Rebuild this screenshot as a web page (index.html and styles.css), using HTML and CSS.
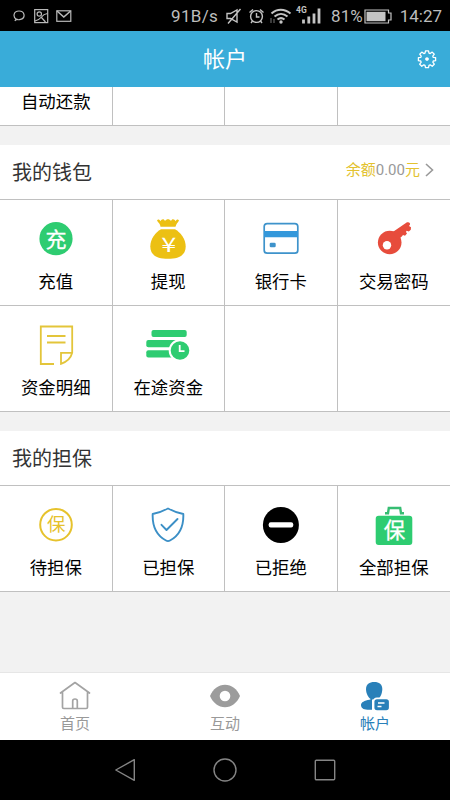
FILE: index.html
```html
<!DOCTYPE html>
<html lang="zh-CN">
<head>
    <meta charset="UTF-8">
    <meta name="viewport" content="width=device-width, initial-scale=1.0">
    <title>帐户</title>
    <link rel="stylesheet" href="styles.css">
</head>
<body>
    <div class="status-bar">
        <svg class="notices" width="60" height="16" viewBox="0 0 60 16" fill="none" stroke="#b9b9b9" stroke-width="1.2">
            <path d="M3.200 11.200C-.2 9 .2 3 6 3s7 7 1.500 8.400c-1.600.5-2.800.4-3.500-.1L1.800 12.800z"/>
            <rect x="21.700" y="1.600" width="13" height="13"/>
            <circle cx="26.300" cy="6" r="2.200"/>
            <path d="M22 13c3-1 5-2 6.500-4s3-3 6-3.500M28.500 9.500l4 4.500"/>
            <rect x="43.800" y="2.800" width="14" height="10.500"/>
            <path d="M44 3l6.800 6 6.800-6" stroke-width="1.600"/>
        </svg>
        <span class="speed">91B/s</span>
        <svg class="signals" width="96" height="22" viewBox="0 0 96 22" fill="none" stroke="#c4c4c4" stroke-width="1.400">
            <path d="M1 8.500h3.500L11 5v12l-6.500-3.500H1zM14.500 4L2 18.500"/>
            <circle cx="30.500" cy="11.500" r="5.900"/>
            <path d="M30.500 8v4h3M23.500 7.500l3.500-3M37.500 7.500l-3.500-3M26.500 16l-1.500 2M34.500 16l1.500 2"/>
            <path d="M45.500 8.500c5.500-5 13-5 19 0M48.500 11.500c4-3.500 9-3.500 13 0M51.500 14.500c2.500-2 4.500-2 7 0" stroke-width="2"/>
            <circle cx="55" cy="17" r="1.700" fill="#c4c4c4" stroke="none"/>
            <path d="M45 13v5M48 14v4" stroke="#777" stroke-width="1"/>
            <path d="M77.500 18.500v-4M82.800 18.500v-7M88 18.500v-10M93 18.500v-15" stroke-width="2.800"/>
            <text class="net" x="70" y="7.500">4G</text>
        </svg>
        <span class="percent">81%</span>
        <svg class="battery" width="28" height="15" viewBox="0 0 28 15" fill="none" stroke="#c4c4c4" stroke-width="1.200">
            <path d="M1 1h23.500v3H27v7h-2.500v3H1z"/>
            <rect x="2.500" y="2.800" width="19" height="9.400" fill="#c4c4c4" stroke="none"/>
        </svg>
        <span class="time">14:27</span>
    </div>

    <header class="header">
        <h1>帐户</h1>
        <svg class="gear" width="20" height="20" viewBox="-10 -10 20 20" fill="none" stroke="#fff" stroke-width="1.300" stroke-linejoin="round">
            <path d="M-1.500-8.200h3l.5 2.300 1.200.5 2-1.500 2.100 2.100-1.500 2 .5 1.200 2.300.3v3l-2.300.3-.5 1.200 1.500 2-2.100 2.100-2-1.500-1.200.5-.5 2.300h-3l-.5-2.300-1.200-.5-2 1.500-2.100-2.100 1.500-2-.5-1.200-2.300-.3v-3l2.300-.3.5-1.200-1.500-2 2.100-2.100 2 1.500 1.200-.5z"/>
            <circle r="1.200" fill="#fff"/>
        </svg>
    </header>

    <main class="content">
        <div class="grid grid-cut">
            <div class="cell"><span class="label">自动还款</span></div>
            <div class="cell"></div>
            <div class="cell"></div>
            <div class="cell"></div>
        </div>

        <section class="section">
            <div class="section-head">
                <h2>我的钱包</h2>
                <div class="balance">
                    余额<span class="amount">0.00</span>元
                    <svg width="9" height="14" viewBox="0 0 9 14" fill="none" stroke="#999" stroke-width="1.600"><path d="M1 1l6.500 6L1 13"/></svg>
                </div>
            </div>
            <div class="grid">
                <div class="cell">
                    <svg class="icon" viewBox="0 0 44 44">
                        <circle cx="22" cy="21.700" r="16.600" fill="#2ecc71"/>
                        <text class="icon-text bold" x="22" y="29.500" font-size="21" fill="#fff">充</text>
                    </svg>
                    <span class="label">充值</span>
                </div>
                <div class="cell">
                    <svg class="icon" viewBox="0 0 44 44">
                        <path fill="#ecc013" d="M11 3.500c1-1.500 2.500-1 3.500.7C15.500 2 18 1.500 19 4c1.500-2.500 4.500-2.500 6 0 1-2.500 3.500-2 4.500.2 1-1.700 2.500-2.200 3.500-.7-1 2-3 3.500-3.500 6.300h-15C14.500 7 12 5.500 11 3.500z"/>
                        <path fill="#ecc013" d="M15 12.300h14c5.500 3 10.700 9.700 10.700 17.200 0 8.500-6.500 12.300-17.700 12.300S4.300 38 4.300 29.500C4.300 22 9.500 15.300 15 12.300z"/>
                        <text class="icon-text yen" transform="translate(22.700 34.700) scale(1.350 1)" font-size="20" fill="#fff">¥</text>
                    </svg>
                    <span class="label">提现</span>
                </div>
                <div class="cell">
                    <svg class="icon" viewBox="0 0 44 44">
                        <rect x="5.200" y="6.600" width="33.600" height="29.600" rx="3" fill="none" stroke="#3e93cb" stroke-width="1.700"/>
                        <path fill="#3498db" d="M5 14h34v6.300H5z"/>
                        <rect x="10.700" y="25.800" width="6" height="4.400" rx="1.300" fill="#3e93cb"/>
                    </svg>
                    <span class="label">银行卡</span>
                </div>
                <div class="cell">
                    <svg class="icon" viewBox="0 0 44 44">
                        <circle cx="17.700" cy="25.500" r="11.800" fill="#e74c3c"/>
                        <path fill="#e74c3c" d="M20 15.500L35 5.300c2-.6 3.500.5 3 2.300l-1 1.500 2 1.200-.2 2.500-2 1.800-2.200-.8-.6 1.200 1 1.500-2 2.200-2-.7-1.200 1.400-3.800 3z"/>
                        <circle cx="15" cy="28.200" r="4.200" fill="#fff"/>
                    </svg>
                    <span class="label">交易密码</span>
                </div>
                <div class="cell">
                    <svg class="icon" viewBox="0 0 44 44" fill="none" stroke="#e3c53a" stroke-width="1.800">
                        <path d="M20 41H6.800V3.500h31.400v26.300q-2 8-11.200 11v-11h11M13 13h18.500M13 19.500h18.500"/>
                    </svg>
                    <span class="label">资金明细</span>
                </div>
                <div class="cell">
                    <svg class="icon" viewBox="0 0 44 44" fill="#2ecc71">
                        <rect x="5.500" y="7" width="35.200" height="7" rx="2"/>
                        <rect x=".3" y="17" width="32" height="7.300" rx="2"/>
                        <rect x=".3" y="27.200" width="30" height="7.300" rx="2"/>
                        <circle cx="34" cy="27.500" r="10.300" stroke="#fff" stroke-width="2"/>
                        <path d="M33.700 22v6.200h4.800" fill="none" stroke="#fff" stroke-width="1.800"/>
                    </svg>
                    <span class="label">在途资金</span>
                </div>
                <div class="cell"></div>
                <div class="cell"></div>
            </div>
        </section>

        <section class="section">
            <div class="section-head">
                <h2>我的担保</h2>
            </div>
            <div class="grid">
                <div class="cell">
                    <svg class="icon" viewBox="0 0 44 44">
                        <circle cx="22" cy="21.700" r="15.800" fill="none" stroke="#e6c22c" stroke-width="2"/>
                        <text class="icon-text" x="22.300" y="28.300" font-size="18.500" fill="#e6c22c">保</text>
                    </svg>
                    <span class="label">待担保</span>
                </div>
                <div class="cell">
                    <svg class="icon" viewBox="0 0 44 44" fill="none" stroke="#3b8fc6" stroke-width="1.900" stroke-linecap="round" stroke-linejoin="round">
                        <path d="M22 5.500c4.500 2.500 9.500 4.300 15.300 5.500.5 12-4 21.500-13.300 26.500q-2 1.200-4 0C10.700 32.500 6.200 23 6.700 11 12.500 9.800 17.500 8 22 5.500z"/>
                        <path d="M15.500 21.800l5 5.200 11-11"/>
                    </svg>
                    <span class="label">已担保</span>
                </div>
                <div class="cell">
                    <svg class="icon" viewBox="0 0 44 44">
                        <circle cx="21.900" cy="22" r="18" fill="#000"/>
                        <rect x="9.700" y="19.300" width="24.500" height="5.200" rx="2" fill="#fff"/>
                    </svg>
                    <span class="label">已拒绝</span>
                </div>
                <div class="cell">
                    <svg class="icon" viewBox="0 0 44 44">
                        <path d="M13 10.300h3l.8-5.300h11.400l.8 5.300h3" fill="none" stroke="#36bd72" stroke-width="2.400"/>
                        <rect x="3.700" y="12.700" width="36.600" height="29.300" rx="3" fill="#2ecc71"/>
                        <text class="icon-text bold" x="22.500" y="35" font-size="21.500" fill="#fff">保</text>
                    </svg>
                    <span class="label">全部担保</span>
                </div>
            </div>
        </section>
    </main>

    <nav class="tab-bar">
        <div class="tab">
            <svg width="32" height="32" viewBox="0 0 32 32" fill="none" stroke="#a3a3a3" stroke-width="1.700" stroke-linejoin="round" stroke-linecap="round">
                <path d="M1.500 13L16 2.500 30.500 13M3.500 12v15.200q0 1.300 1.300 1.300h22.400q1.300 0 1.300-1.300V12"/>
                <path d="M13.700 28v-7q0-2 2.300-2t2.300 2v7"/>
            </svg>
            <span>首页</span>
        </div>
        <div class="tab">
            <svg width="32" height="32" viewBox="0 0 32 32">
                <path fill="#9c9c9c" d="M1 16C4 9 9.500 4.800 16 4.800S28 9 31 16c-3 7-8.500 11.200-15 11.200S4 23 1 16z"/>
                <circle cx="16" cy="16" r="5.300" fill="#fff"/>
            </svg>
            <span>互动</span>
        </div>
        <div class="tab active">
            <svg width="32" height="32" viewBox="0 0 32 32" fill="#2980b9">
                <path d="M15.300 2c5 0 8 2.500 8 7 0 5-2.500 9.500-5 10.500h-6C9.500 18 7 14 7 9c0-4.500 3.300-7 8.300-7z"/>
                <path d="M10.500 19.800L13 18.500v11.200H8.500c-4.500 0-6.500-2-6.500-4.700s3.500-4.300 8.500-5.200z"/>
                <rect x="14.500" y="18.300" width="16.300" height="12.800" rx="3.500" stroke="#fff" stroke-width="1.800"/>
                <path d="M19 23h6.500M18.500 26.500h4" stroke="#fff" stroke-width="1.400"/>
            </svg>
            <span>帐户</span>
        </div>
    </nav>

    <div class="nav-bar">
        <svg width="24" height="24" viewBox="0 0 24 24"><path d="M2.800 12L21.300 1.700v20.600z"/></svg>
        <svg width="24" height="24" viewBox="0 0 24 24"><circle cx="12" cy="12" r="11"/></svg>
        <svg width="24" height="24" viewBox="0 0 24 24"><rect x="2.300" y="2.300" width="19.400" height="19.400" rx="1"/></svg>
    </div>
</body>
</html>
```
FILE: styles.css
```css
* {
    box-sizing: border-box;
}
body {
    margin: 0;
    height: 800px;
    display: flex;
    flex-direction: column;
    overflow: hidden;
    background-color: #f2f2f2;
    color: #000;
    font-family: Roboto, "Noto Sans CJK SC", sans-serif;
}
svg {
    display: block;
    flex: none;
}
h1, h2 {
    margin: 0;
    font-weight: 400;
}

/* Android status bar */
.status-bar {
    display: flex;
    align-items: center;
    height: 31px;
    padding: 1px 8px 0 13px;
    background-color: #000;
    color: #bdbdbd;
    font-size: 17px;
    line-height: 30px;
    white-space: nowrap;
}
.speed {
    margin-left: auto;
    margin-right: 8px;
    letter-spacing: 0.3px;
}
.percent {
    margin-left: 9px;
}
.battery {
    margin-left: 1px;
}
.time {
    margin-left: 8px;
}
.net {
    font-size: 8.5px;
    font-weight: 700;
    fill: #c4c4c4;
    stroke: none;
}

.header {
    display: grid;
    grid-template-columns: 1fr auto 1fr;
    align-items: center;
    height: 56px;
    padding: 0 13px;
    background-color: #39acd9;
    color: #fff;
}
.header h1 {
    grid-column: 2;
    padding-top: 1px;
    font-size: 22px;
    line-height: 30px;
}
.gear {
    justify-self: end;
}

.content {
    flex: 1;
}
.section {
    margin-top: 19px;
}
.section-head {
    display: flex;
    justify-content: space-between;
    align-items: center;
    height: 54px;
    padding: 2px 16px 0 12px;
    background-color: #fff;
}
.section-head h2 {
    color: #333;
    font-size: 20px;
    line-height: 30px;
}
.balance {
    display: flex;
    align-items: center;
    margin-bottom: 6px;
    color: #e3c22f;
    font-size: 15px;
    line-height: 20px;
}
.balance .amount {
    color: #999;
}
.balance svg {
    margin-left: 5px;
}

.grid {
    display: grid;
    grid-template-columns: repeat(4, 1fr);
    grid-auto-rows: 106px;
    border-top: 1px solid #c0c0c0;
    background-color: #fff;
}
.cell {
    display: flex;
    flex-direction: column;
    align-items: center;
    padding-top: 17px;
    border-right: 1px solid #c0c0c0;
    border-bottom: 1px solid #c0c0c0;
}
.cell:nth-child(4n) {
    border-right: none;
}
.icon {
    width: 44px;
    height: 44px;
    margin-bottom: 9px;
}
.icon-text {
    text-anchor: middle;
}
.icon-text.bold {
    stroke: #fff;
    stroke-width: 0.3px;
}
.icon-text.yen {
    font-family: "Noto Sans CJK SC", sans-serif;
}
.label {
    font-size: 17.4px;
    line-height: 24px;
}
/* first row is scrolled half under the header */
.grid-cut {
    grid-auto-rows: 39px;
    border-top: none;
}
.grid-cut .cell {
    padding-top: 3px;
}

.tab-bar {
    display: grid;
    grid-template-columns: repeat(3, 1fr);
    height: 68px;
    border-top: 1px solid #e6e6e6;
    background-color: #fff;
}
.tab {
    display: flex;
    flex-direction: column;
    align-items: center;
    padding-top: 7px;
    color: #999;
    font-size: 15px;
    line-height: 24px;
}
.tab.active {
    color: #2980b9;
}

.nav-bar {
    display: flex;
    justify-content: center;
    align-items: center;
    gap: 76px;
    height: 60px;
    background-color: #000;
}
.nav-bar svg {
    fill: none;
    stroke: #858585;
    stroke-width: 1.4;
    stroke-linejoin: round;
}
```
